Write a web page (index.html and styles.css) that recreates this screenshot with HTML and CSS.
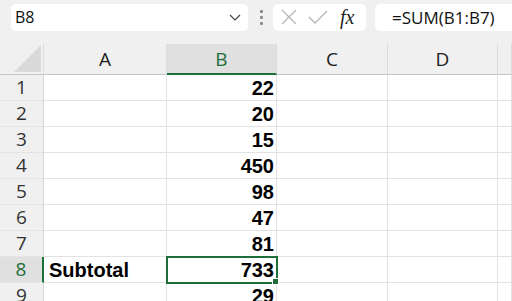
FILE: index.html
```html
<html>
<head>
<meta charset="utf-8">
<link rel="stylesheet" href="styles.css">
</head>
<body>
<div class="bar">
   <div class="namebox">
      <span class="name">B8</span>
      <svg class="chev" width="12" height="7" viewBox="0 0 12 7"><path d="M1 1 L6 6 L11 1" fill="none" stroke="#444" stroke-width="1.2"/></svg>
   </div>
   <div class="dots"><i></i><i></i><i></i></div>
   <div class="tools">
      <svg width="18" height="18" viewBox="0 0 18 18"><path d="M2 2 L16 16 M16 2 L2 16" stroke="#b5b5b5" stroke-width="1.3"/></svg>
      <svg width="22" height="18" viewBox="0 0 22 18"><path d="M2 9 L8 15 L20 3" fill="none" stroke="#b5b5b5" stroke-width="1.3"/></svg>
      <span class="fx">fx</span>
   </div>
   <div class="formula">=SUM(B1:B7)</div>
</div>
<div class="sheet">
   <div class="corner"><span class="tri"></span></div>
   <div class="colhead">A</div>
   <div class="colhead sel">B</div>
   <div class="colhead">C</div>
   <div class="colhead">D</div>
   <div class="colhead"></div>

   <div class="rowhead">1</div><div class="cell"></div><div class="cell num">22</div><div class="cell"></div><div class="cell"></div><div class="cell"></div>
   <div class="rowhead">2</div><div class="cell"></div><div class="cell num">20</div><div class="cell"></div><div class="cell"></div><div class="cell"></div>
   <div class="rowhead">3</div><div class="cell"></div><div class="cell num">15</div><div class="cell"></div><div class="cell"></div><div class="cell"></div>
   <div class="rowhead">4</div><div class="cell"></div><div class="cell num">450</div><div class="cell"></div><div class="cell"></div><div class="cell"></div>
   <div class="rowhead">5</div><div class="cell"></div><div class="cell num">98</div><div class="cell"></div><div class="cell"></div><div class="cell"></div>
   <div class="rowhead">6</div><div class="cell"></div><div class="cell num">47</div><div class="cell"></div><div class="cell"></div><div class="cell"></div>
   <div class="rowhead">7</div><div class="cell"></div><div class="cell num">81</div><div class="cell"></div><div class="cell"></div><div class="cell"></div>
   <div class="rowhead sel">8</div><div class="cell text">Subtotal</div><div class="cell num active">733<span class="handle"></span></div><div class="cell"></div><div class="cell"></div><div class="cell"></div>
   <div class="rowhead">9</div><div class="cell"></div><div class="cell num">29</div><div class="cell"></div><div class="cell"></div><div class="cell"></div>
</div>
</body>
</html>
```

FILE: styles.css
```css
body{
   margin: 0;
   background: #ffffff;
   overflow: hidden;
   font-family: "Open Sans", "Noto Sans", sans-serif;
}
.bar{
   display: flex;
   align-items: center;
   height: 44px;
   padding: 0 0 10px 11px;
   box-sizing: border-box;
   background: #f0f0f0;
}
.namebox{
   display: flex;
   align-items: center;
   justify-content: space-between;
   width: 237px;
   height: 27px;
   box-sizing: border-box;
   padding: 0 7px 0 4px;
   background: #fff;
   border-radius: 5px;
   font-size: 16px;
   color: #111;
}
.dots{
   display: flex;
   flex-direction: column;
   gap: 3px;
   margin: 0 10px 0 12px;
}
.dots i{
   width: 3px;
   height: 3px;
   background: #8a8a8a;
   border-radius: 1px;
}
.tools{
   display: flex;
   align-items: center;
   gap: 9px;
   width: 93px;
   height: 27px;
   box-sizing: border-box;
   padding-left: 7px;
   background: #fff;
   border-radius: 5px;
}
.fx{
   font-family: "Liberation Serif", serif;
   font-style: italic;
   font-size: 20px;
   color: #222;
   margin-left: 2px;
}
.formula{
   flex: 1;
   height: 27px;
   margin-left: 9px;
   padding-left: 17px;
   background: #fff;
   border-radius: 5px 0 0 5px;
   font-size: 17px;
   line-height: 27px;
   color: #111;
}
.sheet{
   display: grid;
   grid-template-columns: 44px 123px 110px 111px 110px 1fr;
   grid-template-rows: 31px repeat(9, 26px);
}
.corner, .colhead, .rowhead, .cell{
   box-sizing: border-box;
}
.corner{
   position: relative;
   background: #f0f0f0;
   border-bottom: 1px solid #c4c4c4;
   border-right: 1px solid #dcdcdc;
}
.tri{
   position: absolute;
   right: 2px;
   bottom: 2px;
   width: 27px;
   height: 27px;
   background: #dadada;
   clip-path: polygon(100% 0, 100% 100%, 0 100%);
}
.colhead{
   background: #f0f0f0;
   border-bottom: 1px solid #c4c4c4;
   border-right: 1px solid #dcdcdc;
   text-align: center;
   font-size: 19px;
   line-height: 30px;
   color: #222;
}
.colhead.sel{
   background: #e0e0e0;
   color: #1e6e3c;
   border-bottom: 2px solid #1e6e3c;
}
.rowhead{
   background: #f0f0f0;
   border-right: 1px solid #d6d6d6;
   border-bottom: 1px solid #e4e4e4;
   text-align: center;
   font-size: 19px;
   line-height: 25px;
   color: #333;
}
.rowhead.sel{
   background: #e0e0e0;
   color: #1e6e3c;
   border-right: 2px solid #1e6e3c;
}
.cell{
   border-right: 1px solid #e2e2e2;
   border-bottom: 1px solid #e2e2e2;
   font-family: "Liberation Sans", Arial, sans-serif;
   font-weight: bold;
   font-size: 20px;
   line-height: 26px;
   color: #000;
   padding: 0 2px;
   white-space: nowrap;
}
.num{
   text-align: right;
}
.text{
   padding-left: 5px;
}
.active{
   position: relative;
   outline: 2px solid #1e6e3c;
   outline-offset: -1px;
}
.handle{
   position: absolute;
   right: -3px;
   bottom: -3px;
   width: 5px;
   height: 5px;
   background: #1e6e3c;
   border: 1px solid #fff;
}
```
